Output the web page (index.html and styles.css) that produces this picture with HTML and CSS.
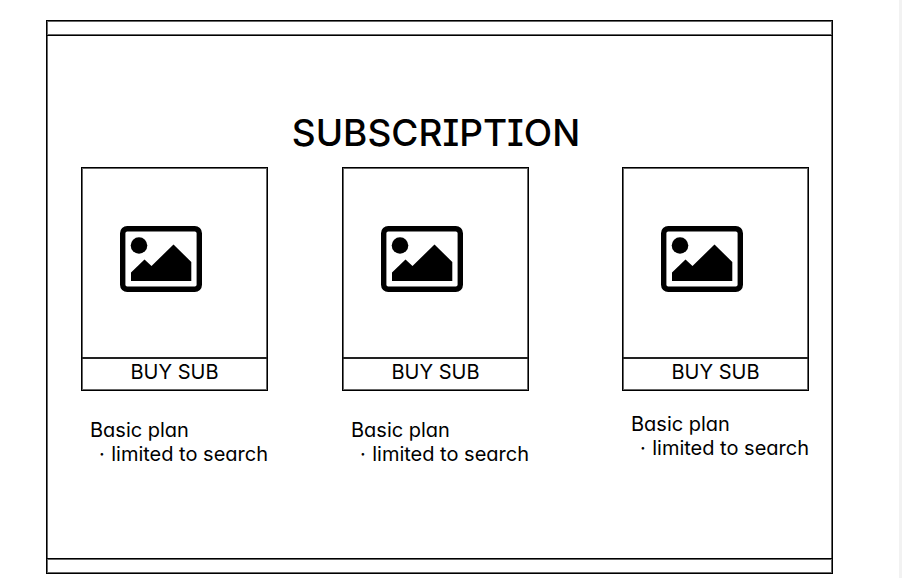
FILE: index.html
```html
<!DOCTYPE html>
<html lang="en">
<head>
<meta charset="utf-8">
<meta name="viewport" content="width=device-width, initial-scale=1">
<title>Subscription</title>
<link rel="stylesheet" href="styles.css">
</head>
<body>
<svg class="sprite" aria-hidden="true">
  <symbol id="picture" viewBox="0 0 82 66">
    <rect x="2.7" y="2.7" width="76.6" height="60.6" rx="4.5" fill="none" stroke="currentColor" stroke-width="5.4"/>
    <circle cx="19" cy="19.5" r="8.3" fill="currentColor"/>
    <path d="M11 55V46.500L24.500 33.500L31.500 40L53.500 18.500L71.300 36V55Z" fill="currentColor"/>
  </symbol>
</svg>
<div class="frame">
  <header class="bar"></header>
  <main class="content">
    <h1 class="title">SUBSCRIPTION</h1>
    <div class="plans">
      <section class="plan">
        <div class="card">
          <div class="picture"><svg class="icon" aria-hidden="true"><use href="#picture"/></svg></div>
          <button class="buy" type="button">BUY SUB</button>
        </div>
        <div class="details">
          <h2 class="name">Basic plan</h2>
          <ul class="features"><li>limited to search</li></ul>
        </div>
      </section>
      <section class="plan">
        <div class="card">
          <div class="picture"><svg class="icon" aria-hidden="true"><use href="#picture"/></svg></div>
          <button class="buy" type="button">BUY SUB</button>
        </div>
        <div class="details">
          <h2 class="name">Basic plan</h2>
          <ul class="features"><li>limited to search</li></ul>
        </div>
      </section>
      <section class="plan">
        <div class="card">
          <div class="picture"><svg class="icon" aria-hidden="true"><use href="#picture"/></svg></div>
          <button class="buy" type="button">BUY SUB</button>
        </div>
        <div class="details raised">
          <h2 class="name">Basic plan</h2>
          <ul class="features"><li>limited to search</li></ul>
        </div>
      </section>
    </div>
  </main>
  <footer class="bar"></footer>
</div>
</body>
</html>
```
FILE: styles.css
```css
:root {
  --ink: #000;
  --soft: #666;
}

*,
*::before {
  box-sizing: border-box;
}

body {
  margin: 0;
  min-height: 100vh;
  padding: 20px 66px 4px 46px;
  border-right: 3px solid #f2f2f2;
  display: flex;
  flex-direction: column;
  background: #fff;
  color: var(--ink);
  font-family: Inter, "Liberation Sans", sans-serif;
  font-size: 20px;
  line-height: 24px;
  font-feature-settings: "cv11", "cv08";
}

.sprite {
  position: absolute;
  width: 0;
  height: 0;
}

.frame {
  flex: 1;
  display: flex;
  flex-direction: column;
  border: 1px solid var(--ink);
  box-shadow: inset 0 0 0 1px var(--soft);
}

.bar {
  height: 15px;
}

header.bar {
  border-bottom: 1px solid var(--ink);
  box-shadow: 0 -1px 0 var(--soft) inset;
}

footer.bar {
  border-top: 1px solid var(--ink);
  box-shadow: 0 1px 0 var(--soft) inset;
}

.content {
  flex: 1;
  padding: 73px 23px 24px 34px;
}

.title {
  margin: 0 0 10px;
  padding-right: 18px;
  text-align: center;
  font-size: 37px;
  line-height: 48px;
  font-weight: 500;
}

.plans {
  display: grid;
  grid-template-columns:
    minmax(0, 187fr) minmax(0, 74fr) minmax(0, 187fr)
    minmax(0, 93fr) minmax(0, 187fr);
}

.plan:nth-child(1) {
  grid-column: 1;
}

.plan:nth-child(2) {
  grid-column: 3;
}

.plan:nth-child(3) {
  grid-column: 5;
}

.card {
  border: 1px solid var(--ink);
  box-shadow: inset 0 0 0 1px var(--soft);
}

.picture {
  height: 189px;
  padding: 58px 0 0 38px;
}

.icon {
  display: block;
  width: 82px;
  height: 66px;
}

.buy {
  display: block;
  width: 100%;
  height: 33px;
  padding: 0 0 5px;
  border: 0;
  border-top: 2px solid #222;
  background: none;
  color: inherit;
  font: inherit;
  font-feature-settings: inherit;
}

.details {
  padding: 27px 0 0 9px;
  white-space: nowrap;
}

.raised {
  padding-top: 21px;
}

.name {
  margin: 0;
  font-size: 20px;
  line-height: 24px;
  font-weight: 400;
}

.features {
  margin: 0;
  padding: 0;
  list-style: none;
}

.features li {
  display: flex;
}

.features li::before {
  content: "·";
  width: 23px;
  padding-left: 9px;
}
```
